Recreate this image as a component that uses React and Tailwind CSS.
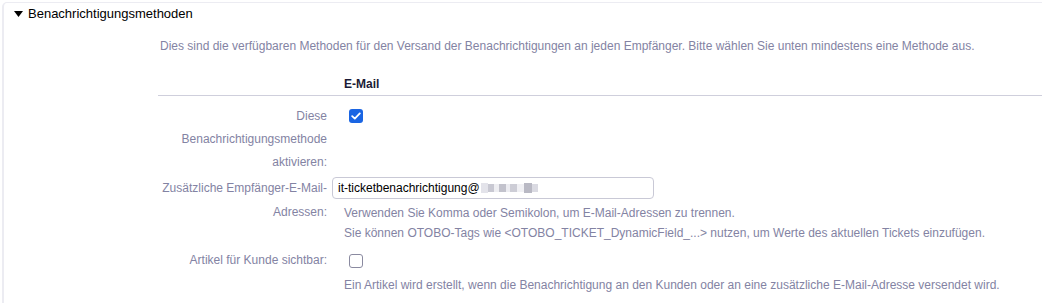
export default function App() {
  const font = { fontFamily: '"Liberation Sans", Arial, sans-serif' };
  return (
    <div className="w-[1042px] h-[303px] bg-white overflow-hidden" style={font}>
      <div className="ml-[2px] mt-[2px] h-[320px] border-l-2 border-t border-[#ececf2] rounded-tl-[5px] bg-white">
        <div className="flex items-center h-[21px] pl-[10px] text-[13px] text-black">
          <svg width="9" height="6" viewBox="0 0 9 6" className="mr-[5px] mt-[1px]">
            <path d="M0 0 L9 0 L4.5 6 Z" fill="#000" />
          </svg>
          <span>Benachrichtigungsmethoden</span>
        </div>
        <div className="pl-[156px] mt-[13px] text-[12px] leading-[18px] text-[#8383a3]">
          Dies sind die verfügbaren Methoden für den Versand der Benachrichtigungen an jeden Empfänger. Bitte wählen Sie unten mindestens eine Methode aus.
        </div>
        <div className="ml-[154px] mt-[21px]">
          <div className="pl-[186px] text-[12px] leading-[16px] font-bold text-[#1b1b36]">E-Mail</div>
          <div className="mt-[3px] border-t border-[#cfcfdc]"></div>
          <div className="flex mt-[9px]">
            <div className="w-[169px] text-right text-[12px] leading-[23px] text-[#8383a3]">
              Diese<br />Benachrichtigungsmethode<br />aktivieren:
            </div>
            <div className="pl-[22px] pt-[4px]">
              <div className="w-[14px] h-[14px] rounded-[3px] bg-[#1a65e3] flex items-center justify-center">
                <svg width="10" height="8" viewBox="0 0 10 8">
                  <path d="M1.2 4.2 L3.8 6.6 L8.8 1.4" stroke="#fff" strokeWidth="1.8" fill="none" strokeLinecap="round" strokeLinejoin="round" />
                </svg>
              </div>
            </div>
          </div>
          <div className="flex mt-[2px]">
            <div className="w-[169px] text-right text-[12px] leading-[24px] text-[#8383a3]">
              Zusätzliche Empfänger-E-Mail-<br />Adressen:
            </div>
            <div className="pl-[5px] pt-[1px]">
              <div className="w-[322px] h-[22px] border border-[#c9c9d6] rounded-[4px] flex items-center pl-[5px] text-[12px] text-black">
                <span>it-ticketbenachrichtigung@</span>
                <span className="inline-flex items-center h-[10px] ml-[1px]">
                  <span className="w-[7px] h-[10px] bg-[#e3e3ea]"></span>
                  <span className="w-[6px] h-[8px] bg-[#c8c8d2]"></span>
                  <span className="w-[5px] h-[8px] bg-[#eeeef2]"></span>
                  <span className="w-[7px] h-[8px] bg-[#c2c2cc]"></span>
                  <span className="w-[4px] h-[8px] bg-[#ececf1]"></span>
                  <span className="w-[7px] h-[8px] bg-[#cdcdd6]"></span>
                  <span className="w-[7px] h-[8px] bg-[#f0f0f4]"></span>
                  <span className="w-[8px] h-[10px] bg-[#b9b9c4]"></span>
                  <span className="w-[6px] h-[8px] bg-[#dadae2]"></span>
                </span>
              </div>
              <div className="pl-[12px] mt-[4px] text-[12px] leading-[20px] text-[#8383a3]">
                <div>Verwenden Sie Komma oder Semikolon, um E-Mail-Adressen zu trennen.</div>
                <div>Sie können OTOBO-Tags wie &lt;OTOBO_TICKET_DynamicField_...&gt; nutzen, um Werte des aktuellen Tickets einzufügen.</div>
              </div>
            </div>
          </div>
          <div className="flex mt-[6px]">
            <div className="w-[169px] text-right text-[12px] leading-[23px] text-[#8383a3]">
              Artikel für Kunde sichtbar:
            </div>
            <div className="pl-[22px] pt-[5px]">
              <div className="w-[14px] h-[14px] rounded-[3px] border border-[#8a8aa0] bg-white"></div>
            </div>
          </div>
          <div className="pl-[186px] mt-[3px] text-[12px] leading-[20px] text-[#8383a3]">
            Ein Artikel wird erstellt, wenn die Benachrichtigung an den Kunden oder an eine zusätzliche E-Mail-Adresse versendet wird.
          </div>
        </div>
      </div>
    </div>
  );
}
